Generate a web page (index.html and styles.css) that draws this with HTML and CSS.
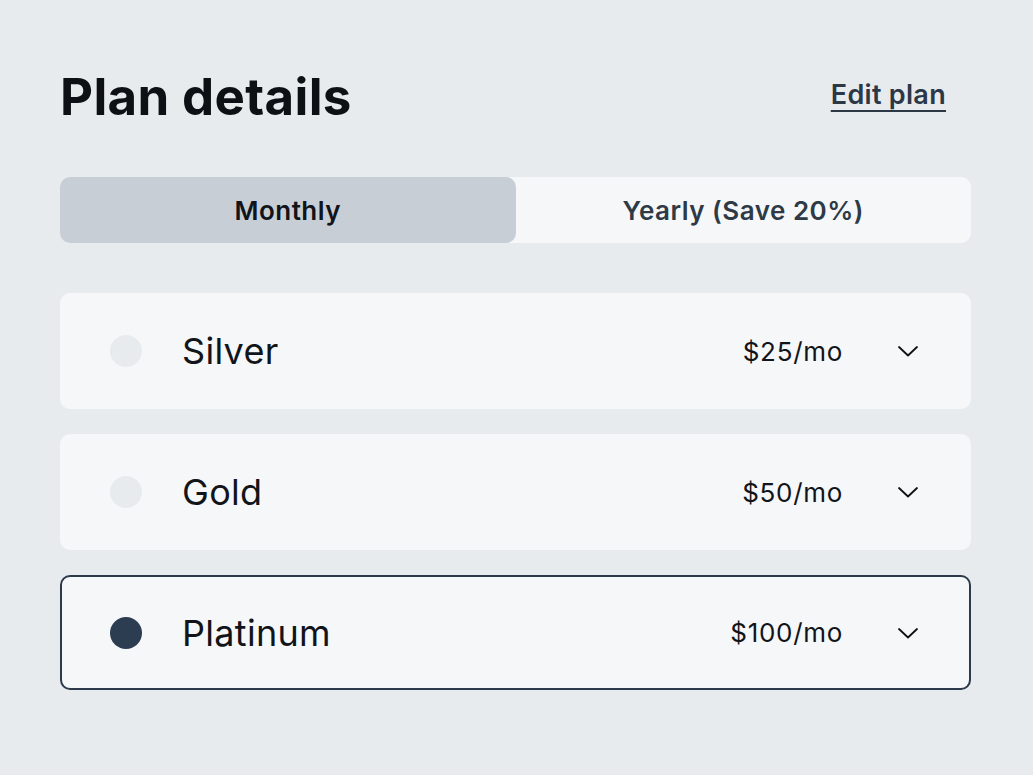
FILE: index.html
```html
<!DOCTYPE HTML>
<html>

<head>
    <meta charset="UTF-8">
    <link rel="stylesheet" href="styles.css">
</head>

<body>
    <div class="page">
        <div class="header">
            <h1 class="title">Plan details</h1>
            <a class="edit-link" href="#">Edit plan</a>
        </div>

        <div class="toggle">
            <button class="toggle-btn active">Monthly</button>
            <button class="toggle-btn">Yearly (Save 20%)</button>
        </div>

        <ul class="plans">
            <li class="plan">
                <span class="radio"></span>
                <span class="plan-name">Silver</span>
                <span class="plan-price">$25/mo</span>
                <svg class="chevron" width="22" height="20" viewBox="0 0 22 20"><path d="M2 6 L11 14.5 L20 6" fill="none" stroke="#111" stroke-width="1.8" stroke-linecap="round" stroke-linejoin="round"/></svg>
            </li>
            <li class="plan">
                <span class="radio"></span>
                <span class="plan-name">Gold</span>
                <span class="plan-price">$50/mo</span>
                <svg class="chevron" width="22" height="20" viewBox="0 0 22 20"><path d="M2 6 L11 14.5 L20 6" fill="none" stroke="#111" stroke-width="1.8" stroke-linecap="round" stroke-linejoin="round"/></svg>
            </li>
            <li class="plan selected">
                <span class="radio"></span>
                <span class="plan-name">Platinum</span>
                <span class="plan-price">$100/mo</span>
                <svg class="chevron" width="22" height="20" viewBox="0 0 22 20"><path d="M2 6 L11 14.5 L20 6" fill="none" stroke="#111" stroke-width="1.8" stroke-linecap="round" stroke-linejoin="round"/></svg>
            </li>
        </ul>
    </div>
</body>

</html>
```

FILE: styles.css
```css
html, body {
    margin: 0;
    padding: 0;
    background-color: #e8ebee;
    font-family: Inter, "Noto Sans", sans-serif;
    color: #111418;
}

.page {
    padding: 62px 62px 0 60px;
}

.header {
    display: flex;
    justify-content: space-between;
    align-items: center;
    height: 68px;
    padding-right: 25px;
}

.title {
    margin: 0;
    font-size: 51px;
    font-weight: 700;
    letter-spacing: 0.35px;
    color: #0d1014;
}

.edit-link {
    margin-bottom: 4px;
    font-size: 27px;
    font-weight: 600;
    letter-spacing: 0.3px;
    color: #2d3847;
    text-decoration: underline;
    text-decoration-thickness: 2px;
    text-underline-offset: 6px;
}

.toggle {
    display: flex;
    margin-top: 47px;
    height: 66px;
    background-color: #f6f7f9;
    border-radius: 10px;
}

.toggle-btn {
    flex: 1;
    border: none;
    background: none;
    border-radius: 10px;
    font-family: inherit;
    font-size: 26px;
    font-weight: 600;
    letter-spacing: 0.5px;
    color: #2e3a46;
}

.toggle-btn.active {
    background-color: #c8ced6;
    color: #111418;
}

.plans {
    list-style: none;
    margin: 50px 0 0 0;
    padding: 0;
    display: flex;
    flex-direction: column;
    gap: 25px;
}

.plan {
    display: flex;
    align-items: center;
    height: 116px;
    padding: 0 52px 0 50px;
    background-color: #f6f7f9;
    border-radius: 10px;
    box-sizing: border-box;
}

.plan.selected {
    border: 2px solid #2d3a4b;
    height: 115px;
    padding: 0 50px 0 48px;
}

.radio {
    width: 32px;
    height: 32px;
    border-radius: 50%;
    background-color: #e8ebee;
}

.selected .radio {
    background-color: #2c3d51;
}

.plan-name {
    flex: 1;
    margin-left: 40px;
    font-size: 36px;
    letter-spacing: 0.3px;
    color: #111418;
}

.plan-price {
    font-size: 26px;
    letter-spacing: 0.7px;
    color: #111418;
}

.chevron {
    margin-left: 54px;
}
```
